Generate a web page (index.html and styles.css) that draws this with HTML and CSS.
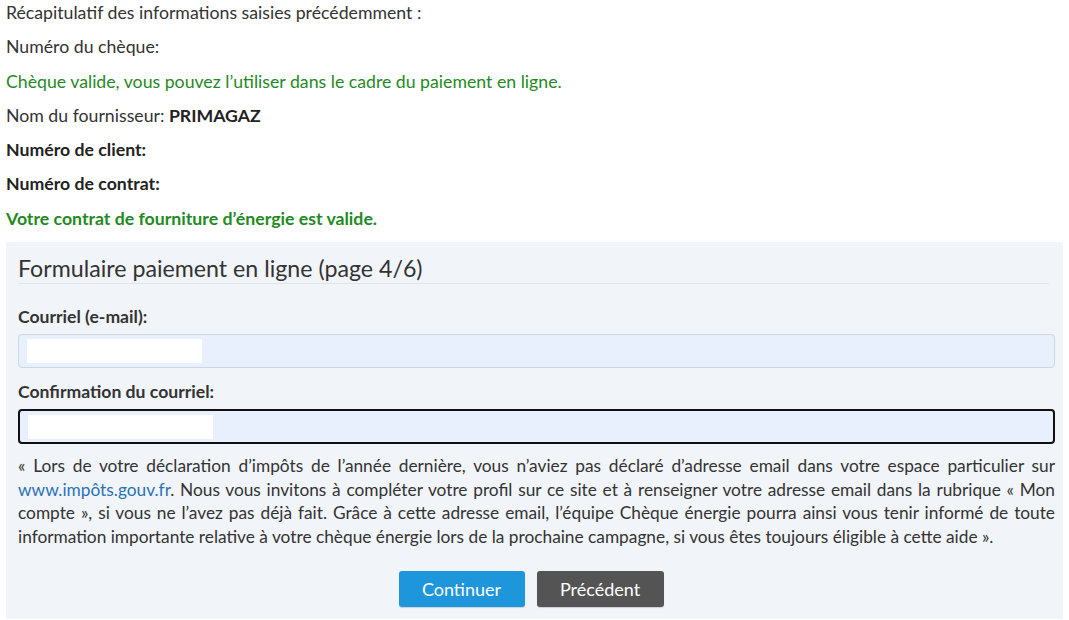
FILE: index.html
```html
<!DOCTYPE html>
<html lang="fr">
<head>
<meta charset="utf-8">
<link rel="stylesheet" href="styles.css">
</head>
<body>
<div class="recap">
  <p>Récapitulatif des informations saisies précédemment :</p>
  <p>Numéro du chèque:</p>
  <p class="ok">Chèque valide, vous pouvez l’utiliser dans le cadre du paiement en ligne.</p>
  <p>Nom du fournisseur: <strong>PRIMAGAZ</strong></p>
  <p><strong>Numéro de client:</strong></p>
  <p><strong>Numéro de contrat:</strong></p>
  <p class="ok"><strong>Votre contrat de fourniture d’énergie est valide.</strong></p>
</div>
<div class="panel">
  <h2 class="title">Formulaire paiement en ligne (page 4/6)</h2>
  <label class="label">Courriel (e-mail):</label>
  <div class="field"><span class="mask mask1"></span></div>
  <label class="label">Confirmation du courriel:</label>
  <div class="field focus"><span class="mask mask2"></span></div>
  <p class="note">«&nbsp;Lors de votre déclaration d’impôts de l’année dernière, vous n’aviez pas déclaré d’adresse email dans votre espace particulier sur <a href="#">www.impôts.gouv.fr</a>. Nous vous invitons à compléter votre profil sur ce site et à renseigner votre adresse email dans la rubrique «&nbsp;Mon compte&nbsp;», si vous ne l’avez pas déjà fait. Grâce à cette adresse email, l’équipe Chèque énergie pourra ainsi vous tenir informé de toute information importante relative à votre chèque énergie lors de la prochaine campagne, si vous êtes toujours éligible à cette aide&nbsp;».</p>
  <div class="actions">
    <button class="btn primary">Continuer</button>
    <button class="btn secondary">Précédent</button>
  </div>
</div>
</body>
</html>
```
FILE: styles.css
```css
html, body {
  margin: 0;
  padding: 0;
  background: #fff;
}
body {
  font-family: Lato, "Liberation Sans", sans-serif;
  color: #333;
  padding: 3px 6px 0 6px;
}
.recap p {
  margin: 0 0 14px 0;
  font-size: 17.7px;
  line-height: 20.3px;
}
.recap strong {
  font-weight: 700;
  color: #222;
}
.recap .ok, .recap .ok strong {
  color: #1f8a1f;
}
.panel {
  background: #f1f4f8;
  margin-top: -1px;
  padding: 13px 8px 12px 12px;
  display: flex;
  flex-direction: column;
}
.title {
  margin: 0 6px 0 0;
  font-size: 23.2px;
  font-weight: 400;
  line-height: 27px;
  color: #333;
  padding-bottom: 1px;
  border-bottom: 1px solid #e1e5ea;
}
.label {
  display: block;
  font-size: 17.6px;
  font-weight: 700;
  color: #333;
  margin-top: 23px;
  line-height: 20px;
}
.field + .label {
  margin-top: 14px;
}
.field {
  margin-top: 7px;
  height: 32px;
  border: 1px solid #cfd6df;
  border-radius: 4px;
  background: #e8f0fe;
  display: flex;
  align-items: center;
  padding-left: 8px;
}
.field.focus {
  height: 31px;
  border: 2px solid #111;
}
.mask {
  display: block;
  background: #fff;
  height: 24px;
}
.mask1 { width: 175px; }
.mask2 { width: 185px; }
.note {
  margin: 10px 0 0 0;
  font-size: 17.3px;
  line-height: 23.7px;
  text-align: justify;
  color: #333;
}
.note a {
  color: #2a72b8;
  text-decoration: none;
}
.actions {
  display: flex;
  justify-content: center;
  gap: 12px;
  margin-top: 22px;
  padding-right: 11px;
}
.btn {
  font-family: Lato, "Liberation Sans", sans-serif;
  font-size: 18px;
  color: #fff;
  border: none;
  border-radius: 3px;
  height: 36px;
  width: 126px;
  padding: 0;
  box-shadow: 0 1px 1px rgba(0,0,0,0.15);
}
.btn.primary { background: #1e96dc; }
.btn.secondary { background: #545454; width: 127px; }
```
